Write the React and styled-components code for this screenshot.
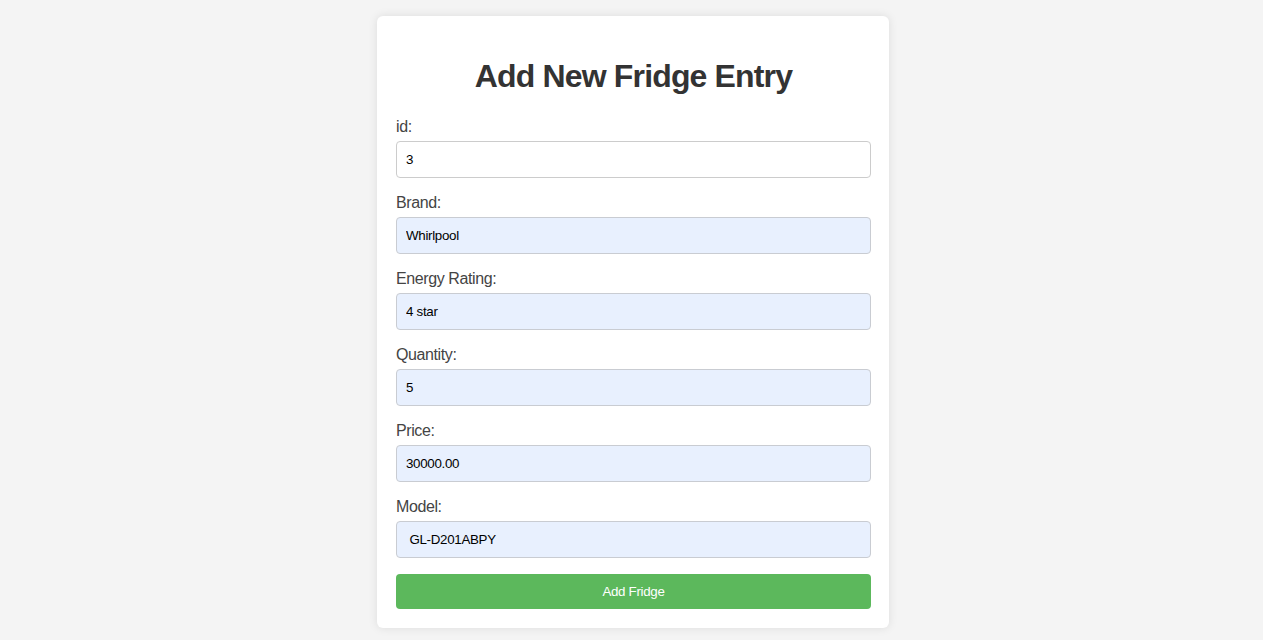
import React from 'react';
import styled, { createGlobalStyle } from 'styled-components';

const GlobalStyle = createGlobalStyle`
  body {
    margin: 0;
    background-color: #f4f4f4;
    font-family: "Liberation Sans", Arial, sans-serif;
  }
`;

const Page = styled.div`
  display: flex;
  justify-content: center;
  padding: 16px 0 20px 3px;
`;

const Card = styled.div`
  width: 512px;
  box-sizing: border-box;
  background: #ffffff;
  border-radius: 6px;
  padding: 20px 18px 19px 19px;
  box-shadow: 0 0 10px rgba(0, 0, 0, 0.1);
`;

const Title = styled.h1`
  text-align: center;
  color: #333;
  font-size: 32px;
  letter-spacing: -0.85px;
  margin: 22px 0 23px;
`;

const Form = styled.form`
  display: flex;
  flex-direction: column;
`;

const Label = styled.label`
  display: block;
  color: #444;
  font-size: 16px;
  letter-spacing: -0.4px;
  margin-bottom: 5px;
`;

const Input = styled.input`
  box-sizing: border-box;
  width: 100%;
  height: 37px;
  padding: 0 9px;
  margin-bottom: 16px;
  font-family: "Liberation Sans", Arial, sans-serif;
  font-size: 13.333px;
  letter-spacing: -0.3px;
  color: #000;
  border: 1px solid ${(p) => (p.$filled ? '#c9ccd2' : '#ccc')};
  border-radius: 4px;
  background: ${(p) => (p.$filled ? '#e8f0fe' : '#fff')};
  outline: none;
`;

const Button = styled.button`
  height: 35px;
  border: none;
  border-radius: 4px;
  background-color: #5cb85c;
  color: #fff;
  font-family: "Liberation Sans", Arial, sans-serif;
  font-size: 13.333px;
  letter-spacing: -0.3px;
  cursor: pointer;
`;

const fields = [
  { name: 'id', label: 'id:', value: '3', filled: false },
  { name: 'brand', label: 'Brand:', value: 'Whirlpool', filled: true },
  { name: 'energyRating', label: 'Energy Rating:', value: '4 star', filled: true },
  { name: 'quantity', label: 'Quantity:', value: '5', filled: true },
  { name: 'price', label: 'Price:', value: '30000.00', filled: true },
  { name: 'model', label: 'Model:', value: ' GL-D201ABPY', filled: true },
];

export default function App() {
  return (
    <>
      <GlobalStyle />
      <Page>
        <Card>
          <Title>Add New Fridge Entry</Title>
          <Form onSubmit={(e) => e.preventDefault()}>
            {fields.map((f) => (
              <React.Fragment key={f.name}>
                <Label htmlFor={f.name}>{f.label}</Label>
                <Input id={f.name} name={f.name} defaultValue={f.value} $filled={f.filled} />
              </React.Fragment>
            ))}
            <Button type="submit">Add Fridge</Button>
          </Form>
        </Card>
      </Page>
    </>
  );
}
